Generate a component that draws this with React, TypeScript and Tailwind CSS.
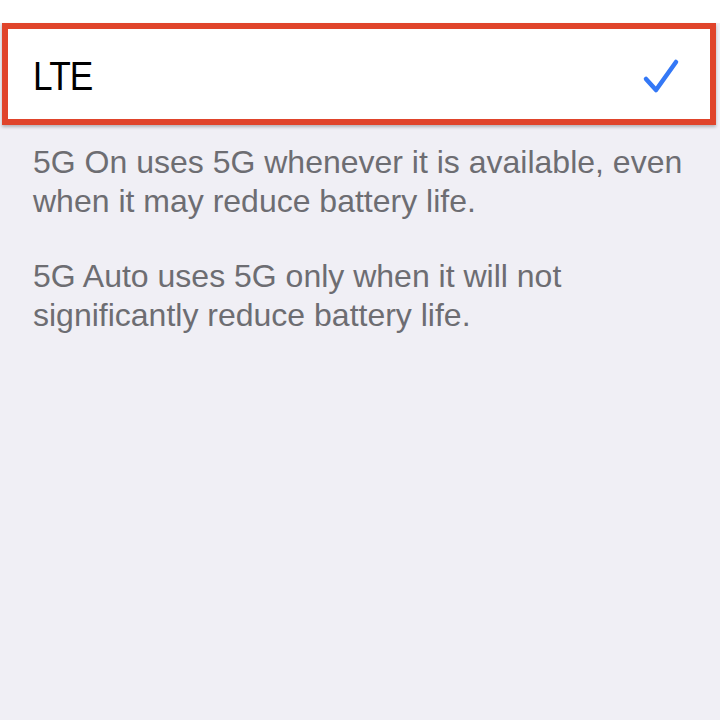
export default function App() {
  return (
    <div className="w-[720px] h-[720px] bg-[#f0eff5] font-['Liberation_Sans',sans-serif]">
      {/* top of the white cell */}
      <div className="h-[23px] bg-white" />
      <div className="ml-[2px] w-[714px] h-[102px] border-[6px] border-[#e0442b] bg-white shadow-[0_2px_3px_rgba(0,0,0,0.25)] flex items-center justify-between pl-[25px] pr-[30px] pt-[4px]">
        <span className="text-[41px] leading-none text-black tracking-[-1px] scale-x-[0.86] origin-left">LTE</span>
        <svg width="38" height="36" viewBox="0 0 38 36" fill="none">
          <path d="M4 21 L14 32 L34 4" stroke="#3478f6" strokeWidth="4.5" strokeLinecap="round" strokeLinejoin="round" />
        </svg>
      </div>
      <div className="pl-[33px] pt-[18px] text-[32px] leading-[38.5px] text-[#6d6d72]">
        <p>5G On uses 5G whenever it is available, even<br />when it may reduce battery life.</p>
        <p className="mt-[37px]">5G Auto uses 5G only when it will not<br />significantly reduce battery life.</p>
      </div>
    </div>
  )
}
